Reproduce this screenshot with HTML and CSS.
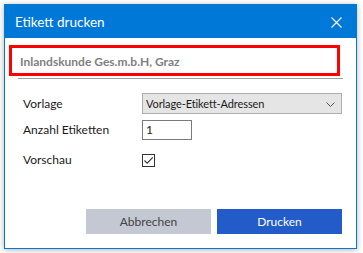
FILE: index.html
```html
<!DOCTYPE html>
<html lang="de">
<head>
  <meta charset="UTF-8">
  <title>Etikett drucken</title>
  <link rel="stylesheet" href="styles.css">
</head>
<body>

<div class="dialog">
  <div class="titlebar">
    <span class="title">Etikett drucken</span>
    <svg class="close" width="11" height="11" viewBox="0 0 11 11">
      <path d="M0.5 0.5 L10.5 10.5 M10.5 0.5 L0.5 10.5" stroke="#fff" stroke-width="1.1" fill="none"/>
    </svg>
  </div>

  <div class="content">
    <div class="customer">Inlandskunde Ges.m.b.H, Graz</div>
    <div class="customer-line"></div>

    <div class="form">
      <div class="row row-select">
        <label>Vorlage</label>
        <div class="select">
          <span>Vorlage-Etikett-Adressen</span>
          <svg width="9" height="5" viewBox="0 0 9 5">
            <path d="M0.5 0.5 L4.5 4.5 L8.5 0.5" stroke="#555" stroke-width="1" fill="none"/>
          </svg>
        </div>
      </div>
      <div class="row row-input">
        <label>Anzahl Etiketten</label>
        <div class="input">1</div>
      </div>
      <div class="row row-check">
        <label>Vorschau</label>
        <div class="checkbox">
          <svg width="11" height="11" viewBox="0 0 11 11">
            <path d="M1.5 5.5 L4.2 8.2 L9.8 2.3" stroke="#333" stroke-width="1.1" fill="none"/>
          </svg>
        </div>
      </div>
    </div>

    <div class="buttons">
      <button class="btn btn-cancel">Abbrechen</button>
      <button class="btn btn-print">Drucken</button>
    </div>
  </div>
</div>

</body>
</html>
```

FILE: styles.css
```css
:root {
  --title-blue: #0078d7;
  --print-blue: #235bc8;
  --cancel-gray: #c4c8d2;
  --text-color: #1a1a1a;
}
* { box-sizing: border-box; }
body {
  margin: 0;
  padding: 4px;
  background-color: #fff;
  font-family: 'Lato', sans-serif;
  font-size: 12px;
  color: var(--text-color);
}
.dialog {
  width: 353px;
  height: 245px;
  border: 1px solid var(--title-blue);
  background-color: #fff;
  display: flex;
  flex-direction: column;
  box-shadow: 0 1px 6px rgba(0,0,0,0.3);
}
.titlebar {
  height: 33px;
  background-color: var(--title-blue);
  color: white;
  display: flex;
  align-items: center;
  justify-content: space-between;
  padding: 0 14px 0 10px;
}
.title { font-size: 13.5px; }
.close { margin-top: 1px; }
.content {
  flex: 1;
  display: flex;
  flex-direction: column;
  padding-bottom: 14px;
}
.customer {
  margin: 7px 16px 0 4px;
  height: 31px;
  border: 3px solid #ff0000;
  padding: 4px 0 0 8px;
  color: #808080;
  font-weight: 700;
  font-size: 12px;
  line-height: 20px;
}
.customer-line {
  height: 1px;
  margin: 2px 13px 0 13px;
  background-color: #a0a0a0;
}
.form {
  margin-top: 14px;
  padding-left: 18px;
}
.row {
  display: grid;
  grid-template-columns: 119px 1fr;
  align-items: center;
}
.row label { line-height: 16px; }
.row-input { margin-top: 6px; }
.row-check { margin-top: 12px; }
.select {
  width: 200px;
  height: 21px;
  background-color: #e5e5e5;
  border: 1px solid #adadad;
  display: flex;
  align-items: center;
  justify-content: space-between;
  padding: 0 6px 0 3px;
  font-size: 11px;
  letter-spacing: -0.1px;
}
.select svg { margin-top: 1px; }
.input {
  width: 50px;
  height: 20px;
  border: 1px solid #7a7a7a;
  padding: 1px 0 0 3px;
  line-height: 16px;
}
.checkbox {
  width: 13px;
  height: 13px;
  border: 1px solid #333;
  display: flex;
  align-items: center;
  justify-content: center;
}
.buttons {
  margin-top: auto;
  display: flex;
  justify-content: flex-end;
  gap: 6px;
  padding-right: 14px;
}
.btn {
  width: 125px;
  height: 25px;
  border: none;
  font-family: 'Lato', sans-serif;
  font-size: 12px;
  cursor: pointer;
}
.btn-cancel {
  background-color: var(--cancel-gray);
  color: #444;
}
.btn-print {
  background-color: var(--print-blue);
  color: white;
}
```
